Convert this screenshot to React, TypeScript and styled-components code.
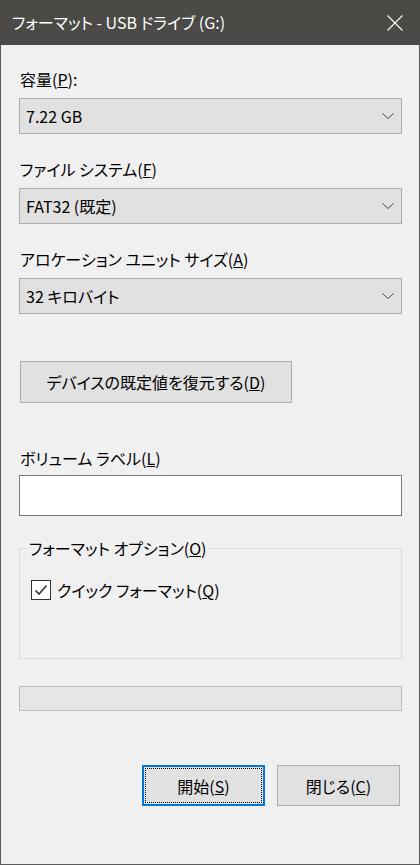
import React from 'react';
import styled, { createGlobalStyle } from 'styled-components';

const GlobalStyle = createGlobalStyle`
  html, body {
    margin: 0;
    padding: 0;
    background: #f0f0f0;
  }
  body {
    font-family: "Noto Sans CJK JP", "Noto Sans", sans-serif;
    font-feature-settings: "palt";
    color: #000;
  }
`;

const Window = styled.div`
  width: 420px;
  height: 865px;
  box-sizing: border-box;
  display: flex;
  flex-direction: column;
  background: #f0f0f0;
  border: 1px solid #5a5a5a;
  border-top: none;
`;

const TitleBar = styled.div`
  height: 45px;
  margin: 0 -1px;
  flex-shrink: 0;
  display: flex;
  align-items: center;
  justify-content: space-between;
  padding: 0 17px 0 12px;
  background: #4b4a47;
  color: #fff;
  font-size: 16px;
  line-height: 20px;
`;

const Title = styled.span`
  padding-bottom: 2px;
`;

const Body = styled.div`
  display: flex;
  flex-direction: column;
  padding: 24px 17px 0 18px;
`;

const Label = styled.div<{ $top?: number }>`
  font-size: 16px;
  line-height: 20px;
  padding-left: 1px;
  margin-top: ${(p) => p.$top ?? 0}px;
  margin-bottom: 9px;
`;

const SelectBox = styled.div`
  height: 36px;
  box-sizing: border-box;
  display: flex;
  align-items: center;
  justify-content: space-between;
  padding: 0 7px 0 6px;
  background: #e1e1e1;
  border: 1px solid #adadad;
  font-size: 16px;
  line-height: 20px;
`;

const WideButton = styled.div`
  width: 272px;
  height: 42px;
  box-sizing: border-box;
  margin-top: 47px;
  margin-left: 1px;
  display: flex;
  align-items: center;
  justify-content: center;
  background: #e1e1e1;
  border: 1px solid #adadad;
  font-size: 16px;
  line-height: 20px;
`;

const TextInput = styled.div`
  height: 41px;
  box-sizing: border-box;
  margin-top: -2px;
  background: #fff;
  border: 1px solid #7a7a7a;
`;

const Group = styled.fieldset`
  margin: 22px 0 0;
  padding: 0 0 58px 0;
  height: 121px;
  box-sizing: border-box;
  border: 1px solid #dcdcdc;
  min-width: 0;
`;

const Legend = styled.legend`
  margin-left: 7px;
  padding: 0 2px;
  font-size: 16px;
  line-height: 20px;
`;

const CheckRow = styled.div`
  margin: 22px 0 0 11px;
  display: flex;
  align-items: center;
  gap: 6px;
  font-size: 16px;
  line-height: 20px;
`;

const CheckBox = styled.div`
  width: 20px;
  height: 20px;
  box-sizing: border-box;
  border: 1px solid #333;
  background: #fff;
  display: flex;
  align-items: center;
  justify-content: center;
`;

const Progress = styled.div`
  height: 25px;
  box-sizing: border-box;
  margin-top: 27px;
  background: #e6e6e6;
  border: 1px solid #bcbcbc;
`;

const Actions = styled.div`
  display: flex;
  justify-content: flex-end;
  gap: 12px;
  margin-top: 54px;
  padding-right: 2px;
`;

const ActionButton = styled.div<{ $default?: boolean }>`
  width: 123px;
  height: 41px;
  box-sizing: border-box;
  display: flex;
  align-items: center;
  justify-content: center;
  background: #e1e1e1;
  font-size: 16px;
  line-height: 20px;
  border: ${(p) => (p.$default ? '2px solid #0078d7' : '1px solid #adadad')};
  outline: ${(p) => (p.$default ? '1px dotted #000' : 'none')};
  outline-offset: -4px;
`;

const Chevron = () => (
  <svg width="12" height="6" viewBox="0 0 12 6">
    <path d="M0.5 0.5 L6 5.5 L11.5 0.5" fill="none" stroke="#444" strokeWidth="1" />
  </svg>
);

const CloseIcon = () => (
  <svg width="16" height="16" viewBox="0 0 16 16">
    <path d="M0.5 0.5 L15.5 15.5 M15.5 0.5 L0.5 15.5" stroke="#fff" strokeWidth="1.1" />
  </svg>
);

const CheckMark = () => (
  <svg width="14" height="12" viewBox="0 0 14 12">
    <path d="M1.5 6.5 L5 10 L12.5 1.5" fill="none" stroke="#333" strokeWidth="1.6" />
  </svg>
);

export default function App() {
  return (
    <>
      <GlobalStyle />
      <Window>
        <TitleBar>
          <Title>フォーマット - USB ドライブ (G:)</Title>
          <CloseIcon />
        </TitleBar>
        <Body>
          <Label>
            容量(<u>P</u>):
          </Label>
          <SelectBox>
            <span>7.22 GB</span>
            <Chevron />
          </SelectBox>

          <Label $top={25}>
            ファイル システム(<u>F</u>)
          </Label>
          <SelectBox>
            <span>FAT32 (既定)</span>
            <Chevron />
          </SelectBox>

          <Label $top={25}>
            アロケーション ユニット サイズ(<u>A</u>)
          </Label>
          <SelectBox>
            <span>32 キロバイト</span>
            <Chevron />
          </SelectBox>

          <WideButton>
            デバイスの既定値を復元する(<u>D</u>)
          </WideButton>

          <Label $top={45}>
            ボリューム ラベル(<u>L</u>)
          </Label>
          <TextInput />

          <Group>
            <Legend>
              フォーマット オプション(<u>O</u>)
            </Legend>
            <CheckRow>
              <CheckBox>
                <CheckMark />
              </CheckBox>
              <span>
                クイック フォーマット(<u>Q</u>)
              </span>
            </CheckRow>
          </Group>

          <Progress />

          <Actions>
            <ActionButton $default>
              開始(<u>S</u>)
            </ActionButton>
            <ActionButton>
              閉じる(<u>C</u>)
            </ActionButton>
          </Actions>
        </Body>
      </Window>
    </>
  );
}
